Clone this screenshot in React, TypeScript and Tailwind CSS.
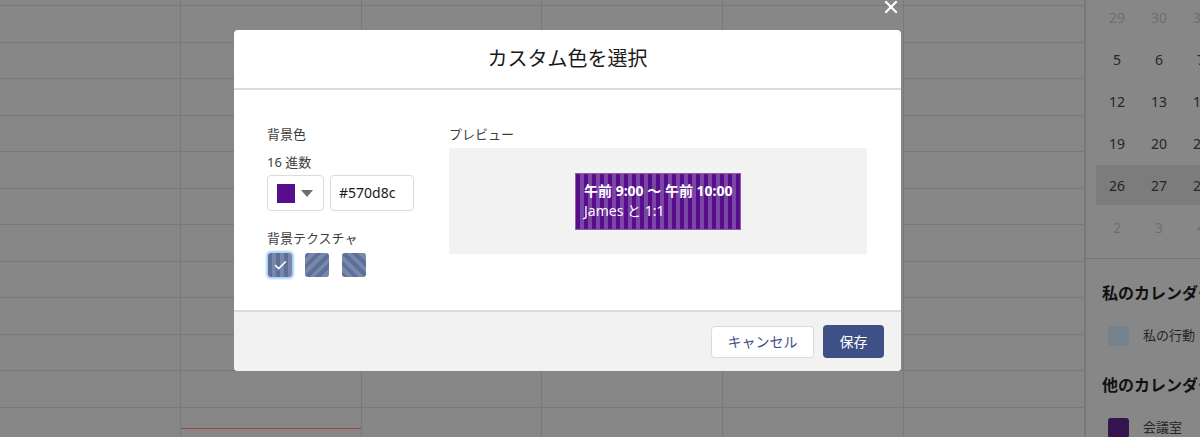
import { X, Check } from 'lucide-react';

const font = 'font-["Noto_Sans","Noto_Sans_CJK_JP",sans-serif]';

const weeks = [
  { days: ['29', '30', '31'], muted: true },
  { days: ['5', '6', '7'] },
  { days: ['12', '13', '14'] },
  { days: ['19', '20', '21'] },
  { days: ['26', '27', '28'], current: true },
  { days: ['2', '3', '4'], muted: true },
];

const CalendarGrid = () => (
  <div className="grid w-[1085px] shrink-0 grid-cols-6">
    {Array.from({ length: 6 }).map((_, col) => (
      <div key={col} className="flex flex-col border-r border-[#797979]">
        <div className="h-[6px] shrink-0 border-b border-[#797979]" />
        {Array.from({ length: 12 }).map((_, row) => (
          <div key={row} className="h-[36.5px] shrink-0 border-b border-[#797979]">
            {/* current time marker */}
            {col === 1 && row === 11 && <div className="mt-[20px] h-px bg-[#a04545]" />}
          </div>
        ))}
      </div>
    ))}
  </div>
);

const Sidebar = () => (
  <aside className="flex-1 overflow-hidden whitespace-nowrap">
    <div className="-mt-[4px] pl-[10px]">
      {weeks.map((week, i) => (
        <div key={i} className="flex h-[42px] items-center py-px">
          <div className={`flex h-[40px] w-[130px] items-center ${week.current ? 'bg-[#7c7c7c]' : ''}`}>
            {week.days.map((d) => (
              <span
                key={d}
                className={`w-[42px] text-center text-[14px] ${week.muted ? 'text-[#6e6e6e]' : 'text-[#262626]'}`}
              >
                {d}
              </span>
            ))}
          </div>
        </div>
      ))}
    </div>
    <div className="mt-[10px] border-t border-[#777777] pl-[16px] pt-[22px]">
      <h3 className="text-[16px] leading-[24px] font-bold text-[#111111]">私のカレンダー</h3>
      <div className="mt-[21px] flex items-center pl-[6px]">
        <span className="h-[20px] w-[21px] rounded-[3px] bg-[#75838f]" />
        <span className="ml-[14px] text-[13px] text-[#262626]">私の行動</span>
      </div>
      <h3 className="mt-[27px] text-[16px] leading-[24px] font-bold text-[#111111]">他のカレンダー</h3>
      <div className="mt-[21px] flex items-center pl-[6px]">
        <span className="h-[20px] w-[21px] rounded-[3px] bg-[#36144d]" />
        <span className="ml-[14px] text-[13px] text-[#262626]">会議室</span>
      </div>
    </div>
  </aside>
);

const textures = [
  { id: 'vertical', cls: 'bg-[image:repeating-linear-gradient(90deg,#5d7098_0_4px,#7888aa_4px_8px)]', checked: true },
  { id: 'diag-up', cls: 'bg-[image:repeating-linear-gradient(135deg,#5d7098_0_4px,#7888aa_4px_8px)]' },
  { id: 'diag-down', cls: 'bg-[image:repeating-linear-gradient(45deg,#5d7098_0_4px,#7888aa_4px_8px)]' },
];

const Dialog = () => (
  <div className="absolute left-[234px] top-[30px] w-[667px] rounded-[4px] bg-white">
    <button className="absolute -top-[33px] right-0 text-white">
      <X className="h-[20px] w-[20px]" strokeWidth={2.75} />
    </button>
    <header className="flex h-[60px] items-center justify-center border-b-2 border-[#dddbda]">
      <h2 className="text-[20px] text-[#1a1a1a]">カスタム色を選択</h2>
    </header>

    <div className="flex h-[220px] gap-[35px] pl-[33px] pr-[34px] pt-[34px]">
      <div className="w-[147px] shrink-0 text-[13px] leading-[20px] text-[#3e3e3c]">
        <p>背景色</p>
        <p className="mt-[8px]">16 進数</p>
        <div className="mt-[3px] flex gap-[6px]">
          <button className="flex h-[36px] w-[57px] items-center rounded-[4px] border border-[#dddbda] pl-[9px]">
            <span className="h-[19px] w-[18px] bg-[#570d8c]" />
            <span className="ml-[6px] h-0 w-0 border-x-[6px] border-t-[7px] border-x-transparent border-t-[#706e6b]" />
          </button>
          <div className="flex h-[36px] w-[84px] items-center rounded-[4px] border border-[#dddbda] pl-[8px] text-[14px] text-[#1a1a1a]">
            #570d8c
          </div>
        </div>
        <p className="mt-[17px]">背景テクスチャ</p>
        <div className="mt-[5px] flex gap-[13px] pl-px">
          {textures.map((t) => (
            <div
              key={t.id}
              className={`flex h-[24px] w-[24px] items-center justify-center rounded-[3px] ${t.cls} ${
                t.checked ? 'shadow-[0_0_2px_2px_#a9d1f5]' : ''
              }`}
            >
              {t.checked && <Check className="h-[15px] w-[15px] text-white" strokeWidth={2.5} />}
            </div>
          ))}
        </div>
      </div>

      <div className="flex-1">
        <p className="text-[13px] leading-[20px] text-[#3e3e3c]">プレビュー</p>
        <div className="mt-[4px] flex h-[106px] items-center justify-center bg-[#f2f2f2]">
          <div className="h-[57px] w-[166px] border border-[#8b5fae] bg-[image:repeating-linear-gradient(90deg,#570d8c_0_4px,#7a46a3_4px_8px)] pl-[8px] pt-[6px] text-white">
            <p className="text-[14px] leading-[21px] font-bold">午前 9:00 〜 午前 10:00</p>
            <p className="text-[14px] leading-[19px]">James と 1:1</p>
          </div>
        </div>
      </div>
    </div>

    <footer className="flex h-[61px] items-center justify-end gap-[9px] rounded-b-[4px] border-t-2 border-[#dddbda] bg-[#f3f2f2] pr-[17px]">
      <button className="h-[32px] w-[103px] rounded-[4px] border border-[#dddbda] bg-white text-[14px] text-[#3e5086]">
        キャンセル
      </button>
      <button className="h-[33px] w-[61px] rounded-[4px] bg-[#3e5086] text-[14px] text-white">保存</button>
    </footer>
  </div>
);

export default function App() {
  return (
    <div className={`relative flex h-[437px] w-[1200px] overflow-hidden bg-[#878787] ${font}`}>
      <CalendarGrid />
      <div className="h-full border-l border-[#777777]" />
      <Sidebar />
      <Dialog />
    </div>
  );
}
